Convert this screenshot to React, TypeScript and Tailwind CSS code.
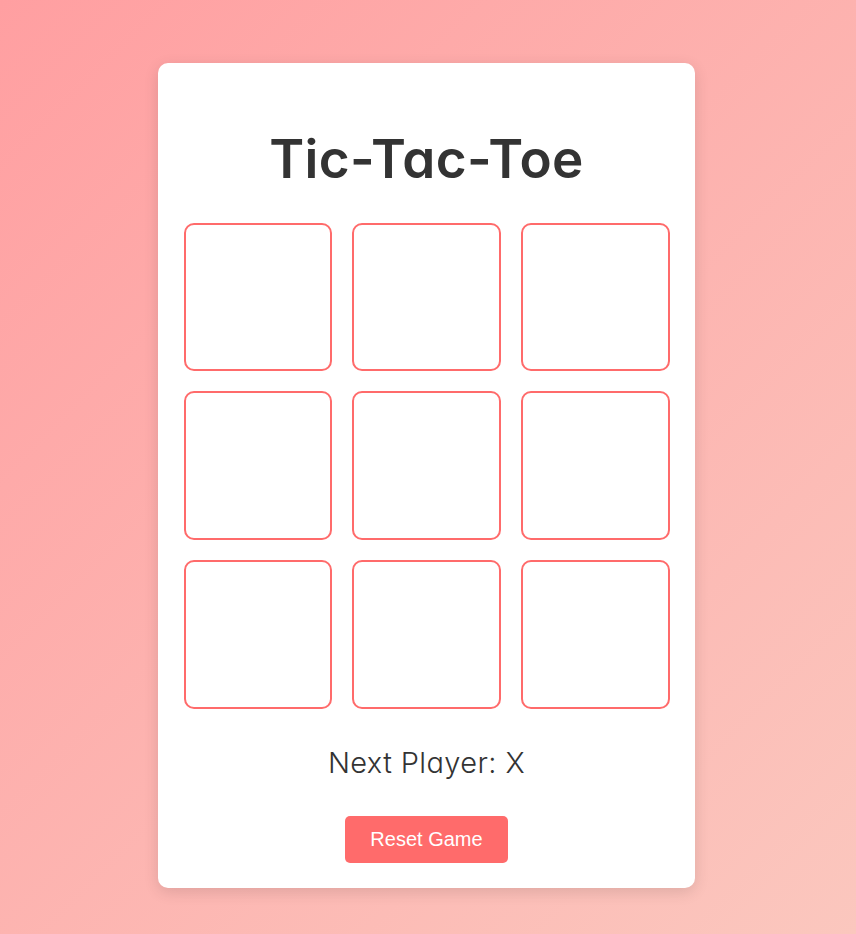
import React, { useState } from "react";

type Cell = "X" | "O" | null;

const lines = [
    [0, 1, 2],
    [3, 4, 5],
    [6, 7, 8],
    [0, 3, 6],
    [1, 4, 7],
    [2, 5, 8],
    [0, 4, 8],
    [2, 4, 6],
];

const getWinner = (cells: Cell[]): Cell => {
    for (const [a, b, c] of lines) {
        if (cells[a] && cells[a] === cells[b] && cells[a] === cells[c]) return cells[a];
    }
    return null;
};

const App: React.FC = () => {
    const [cells, setCells] = useState<Cell[]>(Array(9).fill(null));
    const [xNext, setXNext] = useState(true);

    const winner = getWinner(cells);
    const full = cells.every((c) => c !== null);

    const handleClick = (i: number) => {
        if (cells[i] || winner) return;
        const next = cells.slice();
        next[i] = xNext ? "X" : "O";
        setCells(next);
        setXNext(!xNext);
    };

    const reset = () => {
        setCells(Array(9).fill(null));
        setXNext(true);
    };

    let status = `Next Player: ${xNext ? "X" : "O"}`;
    if (winner) status = `Winner: ${winner}`;
    else if (full) status = "Draw!";

    return (
        <div className="min-h-[934px] w-full bg-[linear-gradient(135deg,#ff9fa1_0%,#fbc7be_100%)] flex justify-center pt-[63px] pr-[3px] font-['Inter',sans-serif] [font-feature-settings:'cv11']">
            <div className="w-[537px] h-[825px] bg-white rounded-[10px] shadow-[0_4px_15px_rgba(0,0,0,0.12)] px-[26px] pt-[25px] pb-[25px] flex flex-col items-center">
                {/* title */}
                <div className="h-[135px] w-full flex items-center justify-center pt-[8px]">
                    <h1 className="text-[53px] leading-none font-semibold text-[#333] tracking-[0.4px]">Tic-Tac-Toe</h1>
                </div>

                <div className="w-[486px] grid grid-cols-3 gap-[20px]">
                    {cells.map((c, i) => (
                        <button
                            key={i}
                            onClick={() => handleClick(i)}
                            className="aspect-square border-2 border-[#ff6b6b] rounded-[10px] bg-white text-[64px] font-semibold text-[#ff6b6b] flex items-center justify-center"
                        >
                            {c}
                        </button>
                    ))}
                </div>

                <div className="h-[108px] w-full flex items-center justify-center">
                    <p className="text-[29px] leading-none font-light text-[#333] tracking-[0.4px]">{status}</p>
                </div>

                <button
                    onClick={reset}
                    className="h-[47px] bg-[#ff6b6b] text-white rounded-[5px] px-[25px] text-[20px] leading-[23px] font-['Liberation_Sans',Arial,sans-serif] [font-feature-settings:normal]"
                >
                    Reset Game
                </button>
            </div>
        </div>
    );
};

export default App;
